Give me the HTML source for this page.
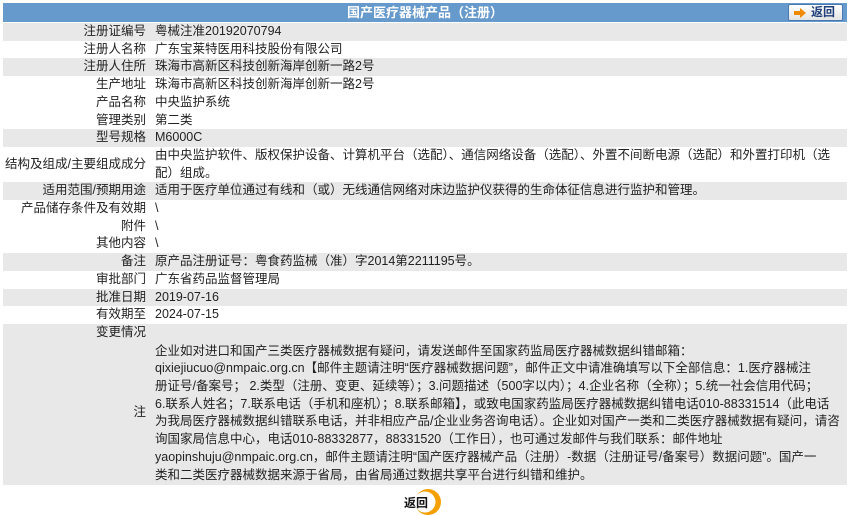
<!DOCTYPE html>
<html><head><meta charset="utf-8"><style>
*{margin:0;padding:0;box-sizing:border-box}
body{width:850px;height:516px;background:#fff;font-family:"Liberation Sans","Noto Sans CJK SC",sans-serif;font-size:12.5px;color:#222;position:relative;overflow:hidden}
.hdr{position:absolute;left:3px;top:3px;width:844px;height:19px;background:#6699cc;color:#fff;font-weight:bold;text-align:center;line-height:19px;font-size:13px}
.btn{position:absolute;left:788px;top:4px;width:55px;height:17px;border:1px solid #4a78b0;border-radius:2px;background:linear-gradient(#fff,#e4e4e4);font-weight:bold;color:#1f3f7a;font-size:12px;line-height:15px}
.row{position:absolute;left:3px;width:844px;line-height:17.7px;overflow:hidden}
.g{background:#e8e8e8}
.l{position:absolute;left:0;width:143px;text-align:right;white-space:nowrap}
.v{position:absolute;left:152px;width:692px;white-space:nowrap}
</style></head><body>
<div class="hdr">国产医疗器械产品（注册）</div>
<div class="btn"><svg style="position:absolute;left:5px;top:3px" width="13" height="10" viewBox="0 0 13 10"><path d="M0 3h6V0l6 5-6 5V7H0z" fill="#f08a00"/></svg><span style="position:absolute;left:22px;top:0">返回</span></div>

<div class="row g" style="top:23px;height:17.7px"><span class="l">注册证编号</span><span class="v">粤械注准20192070794</span></div>
<div class="row" style="top:40.7px;height:17.7px"><span class="l">注册人名称</span><span class="v">广东宝莱特医用科技股份有限公司</span></div>
<div class="row g" style="top:58.4px;height:17.7px"><span class="l">注册人住所</span><span class="v">珠海市高新区科技创新海岸创新一路2号</span></div>
<div class="row" style="top:76.1px;height:17.7px"><span class="l">生产地址</span><span class="v">珠海市高新区科技创新海岸创新一路2号</span></div>
<div class="row" style="top:93.8px;height:17.7px"><span class="l">产品名称</span><span class="v">中央监护系统</span></div>
<div class="row" style="top:111.5px;height:17.7px"><span class="l">管理类别</span><span class="v">第二类</span></div>
<div class="row g" style="top:129.2px;height:17.7px"><span class="l">型号规格</span><span class="v">M6000C</span></div>
<div class="row" style="top:146.9px;height:35.4px"><span class="l" style="top:8.8px">结构及组成/主要组成成分</span><span class="v">由中央监护软件、版权保护设备、计算机平台（选配）、通信网络设备（选配）、外置不间断电源（选配）和外置打印机（选<br>配）组成。</span></div>
<div class="row g" style="top:182.3px;height:17.7px"><span class="l">适用范围/预期用途</span><span class="v">适用于医疗单位通过有线和（或）无线通信网络对床边监护仪获得的生命体征信息进行监护和管理。</span></div>
<div class="row" style="top:200px;height:17.7px"><span class="l">产品储存条件及有效期</span><span class="v">\</span></div>
<div class="row" style="top:217.7px;height:17.7px"><span class="l">附件</span><span class="v">\</span></div>
<div class="row" style="top:235.4px;height:17.7px"><span class="l">其他内容</span><span class="v">\</span></div>
<div class="row g" style="top:253.1px;height:17.7px"><span class="l">备注</span><span class="v">原产品注册证号：粤食药监械（准）字2014第2211195号。</span></div>
<div class="row" style="top:270.8px;height:17.7px"><span class="l">审批部门</span><span class="v">广东省药品监督管理局</span></div>
<div class="row g" style="top:288.5px;height:17.7px"><span class="l">批准日期</span><span class="v">2019-07-16</span></div>
<div class="row" style="top:306.2px;height:17.7px"><span class="l">有效期至</span><span class="v">2024-07-15</span></div>
<div class="row g" style="top:323.9px;height:17.7px"><span class="l">变更情况</span><span class="v"></span></div>
<div class="row g" style="top:341.6px;height:143px"><span class="l" style="top:62px">注</span><span class="v" style="top:1px">企业如对进口和国产三类医疗器械数据有疑问，请发送邮件至国家药监局医疗器械数据纠错邮箱：<br>qixiejiucuo@nmpaic.org.cn【邮件主题请注明“医疗器械数据问题”，邮件正文中请准确填写以下全部信息：1.医疗器械注<br>册证号/备案号； 2.类型（注册、变更、延续等）；3.问题描述（500字以内）；4.企业名称（全称）；5.统一社会信用代码；<br>6.联系人姓名；7.联系电话（手机和座机）；8.联系邮箱】，或致电国家药监局医疗器械数据纠错电话010-88331514（此电话<br>为我局医疗器械数据纠错联系电话，并非相应产品/企业业务咨询电话）。企业如对国产一类和二类医疗器械数据有疑问，请咨<br>询国家局信息中心，电话010-88332877，88331520（工作日），也可通过发邮件与我们联系：邮件地址<br>yaopinshuju@nmpaic.org.cn，邮件主题请注明“国产医疗器械产品（注册）-数据（注册证号/备案号）数据问题”。国产一<br>类和二类医疗器械数据来源于省局，由省局通过数据共享平台进行纠错和维护。</span></div>

<svg style="position:absolute;left:414px;top:489px" width="30" height="27" viewBox="0 0 30 27"><circle cx="14" cy="13" r="13" fill="#f5a000"/><circle cx="11" cy="13" r="10.5" fill="#fff"/></svg>
<div style="position:absolute;left:404px;top:494px;font-weight:bold;font-size:12px;color:#111">返回</div>
</body></html>
